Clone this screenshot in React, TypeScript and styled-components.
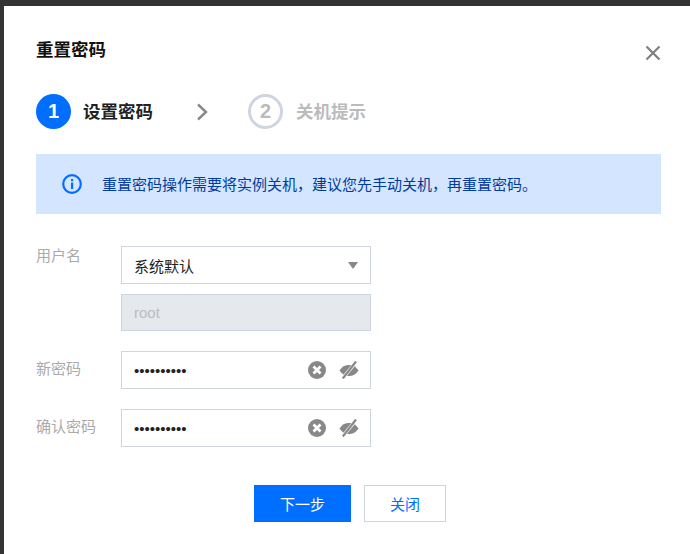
import React from 'react';
import styled, { createGlobalStyle } from 'styled-components';

const Global = createGlobalStyle`
  html, body { margin: 0; padding: 0; width: 690px; height: 554px; overflow: hidden; background: #333; }
  * { box-sizing: border-box; }
  body { font-family: "Liberation Sans", "Noto Sans CJK SC", sans-serif; }
`;
const Page = styled.div`
  width: 690px; height: 554px; padding: 6px 0 0 4px; background: #333;
`;
const Dialog = styled.div`
  position: relative; width: 686px; height: 548px; background: #fff; padding: 32px 29px 0 32px;
`;
const Title = styled.h2`
  margin: 0; font-size: 17.5px; font-weight: 700; line-height: 24px; color: #111;
`;
const Close = styled.svg`
  position: absolute; top: 39px; right: 29px; width: 16px; height: 16px;
`;
const Steps = styled.div`
  display: flex; align-items: center; margin-top: 32px; height: 35px;
`;
const Circle = styled.div<{ $active?: boolean }>`
  width: 35px; height: 35px; border-radius: 50%; display: flex; align-items: center; justify-content: center;
  font-size: 20px; font-weight: 700; flex: none;
  background: ${p => (p.$active ? '#006eff' : '#fff')};
  color: ${p => (p.$active ? '#fff' : '#bbb')};
  border: ${p => (p.$active ? 'none' : '3px solid #cfd5de')};
`;
const StepLabel = styled.span<{ $active?: boolean }>`
  margin-left: ${p => (p.$active ? 12 : 13)}px; font-size: 17.5px; font-weight: 700; line-height: 24px;
  color: ${p => (p.$active ? '#222' : '#bbb')};
`;
const Chevron = styled.svg`
  width: 12px; height: 18px; margin: 0 40px 0 43px; flex: none;
`;
const Alert = styled.div`
  display: flex; align-items: center; height: 60px; width: 625px; margin-top: 25px; padding: 0 0 2px 26px;
  background: #d4e5ff; color: #003b9e; font-size: 15px;
`;
const AlertIcon = styled.svg`
  width: 20px; height: 20px; margin: 2px 20px 0 0; flex: none;
`;
const Form = styled.div`
  display: grid; grid-template-columns: 85px 250px; margin-top: 32px;
`;
const Label = styled.label`
  display: block; font-size: 15px; line-height: 20px; color: #aaa;
`;
const Field = styled.div<{ $gap?: number }>`
  display: flex; align-items: center; height: 38px; padding: 0 11px 0 12px; background: #fff;
  border: 1px solid #cfd5de; font-size: 15px; color: #222; margin-bottom: ${p => p.$gap ?? 0}px;
`;
const DisabledField = styled(Field)`
  height: 37px; background: #e5e8ed; color: #bdbdbd;
`;
const Value = styled.span` flex: 1; `;
const Caret = styled.span`
  width: 0; height: 0; border-left: 5.5px solid transparent; border-right: 5.5px solid transparent;
  border-top: 7px solid #888; margin: 0 1px 0 0;
`;
const Dots = styled.span`
  flex: 1; color: #222; font-size: 15px; line-height: 1; font-family: "Liberation Sans", sans-serif; padding-top: 1px;
`;
const Icon = styled.svg`
  flex: none;
`;
const Spacer = styled.div``;
const Row = styled.div<{ $pad: number }>`
  padding-top: ${p => p.$pad}px;
`;
const Footer = styled.div`
  display: flex; width: 625px; justify-content: center; gap: 13px; margin-top: 38px; padding-left: 3px;
`;
const Button = styled.button<{ $primary?: boolean; $w: number }>`
  width: ${p => p.$w}px; height: 37px; font: inherit; font-size: 15px; padding: 0; cursor: pointer;
  background: ${p => (p.$primary ? '#006eff' : '#fff')};
  color: ${p => (p.$primary ? '#fff' : '#006eff')};
  border: 1px solid ${p => (p.$primary ? '#006eff' : '#cfd5de')};
`;

const ClearIcon = () => (
  <Icon width="18" height="18" viewBox="0 0 18 18" style={{ marginRight: 13 }}>
    <circle cx="9" cy="9" r="9" fill="#888" />
    <path d="M5.500 5.500l7 7M12.500 5.500l-7 7" stroke="#fff" strokeWidth="2.800" />
  </Icon>
);
const EyeOff = () => (
  <Icon width="20" height="18" viewBox="0 0 20 18" fill="none">
    <path d="M0.500 9.500C3 5.800 6 4 10 4s7 1.800 9.500 5.500C17 13.200 14 15 10 15S3 13.200 0.500 9.500z" fill="#888" />
    <path d="M17.500 0.500L3.500 17.500" stroke="#fff" strokeWidth="3.400" />
    <path d="M17 0.500L3.800 17.500" stroke="#888" strokeWidth="2.200" />
  </Icon>
);
const Secret = () => <Dots>••••••••••</Dots>;

export default function App() {
  return (
    <Page>
      <Global />
      <Dialog>
        <Title>重置密码</Title>
        <Close viewBox="0 0 16 16">
          <path d="M1.500 1.500l13 13M14.500 1.500l-13 13" stroke="#7f7f7f" strokeWidth="2.200" fill="none" />
        </Close>
        <Steps>
          <Circle $active>1</Circle>
          <StepLabel $active>设置密码</StepLabel>
          <Chevron viewBox="0 0 12 18">
            <path d="M2 1.500L10 9l-8 7.500" stroke="#888" strokeWidth="2.400" fill="none" />
          </Chevron>
          <Circle>2</Circle>
          <StepLabel>关机提示</StepLabel>
        </Steps>
        <Alert>
          <AlertIcon viewBox="0 0 20 20">
            <circle cx="10" cy="10" r="8.800" fill="none" stroke="#006eff" strokeWidth="2.200" />
            <rect x="9" y="5" width="2.200" height="2.200" fill="#006eff" />
            <rect x="9" y="8.500" width="2.200" height="6.500" fill="#006eff" />
          </AlertIcon>
          重置密码操作需要将实例关机，建议您先手动关机，再重置密码。
        </Alert>
        <Form>
          <Label>用户名</Label>
          <Field $gap={10}>
            <Value>系统默认</Value>
            <Caret />
          </Field>
          <Spacer />
          <DisabledField>root</DisabledField>
          <Row $pad={28}><Label>新密码</Label></Row>
          <Row $pad={20}>
            <Field><Secret /><ClearIcon /><EyeOff /></Field>
          </Row>
          <Row $pad={28}><Label>确认密码</Label></Row>
          <Row $pad={20}>
            <Field><Secret /><ClearIcon /><EyeOff /></Field>
          </Row>
        </Form>
        <Footer>
          <Button $primary $w={97}>下一步</Button>
          <Button $w={82}>关闭</Button>
        </Footer>
      </Dialog>
    </Page>
  );
}
